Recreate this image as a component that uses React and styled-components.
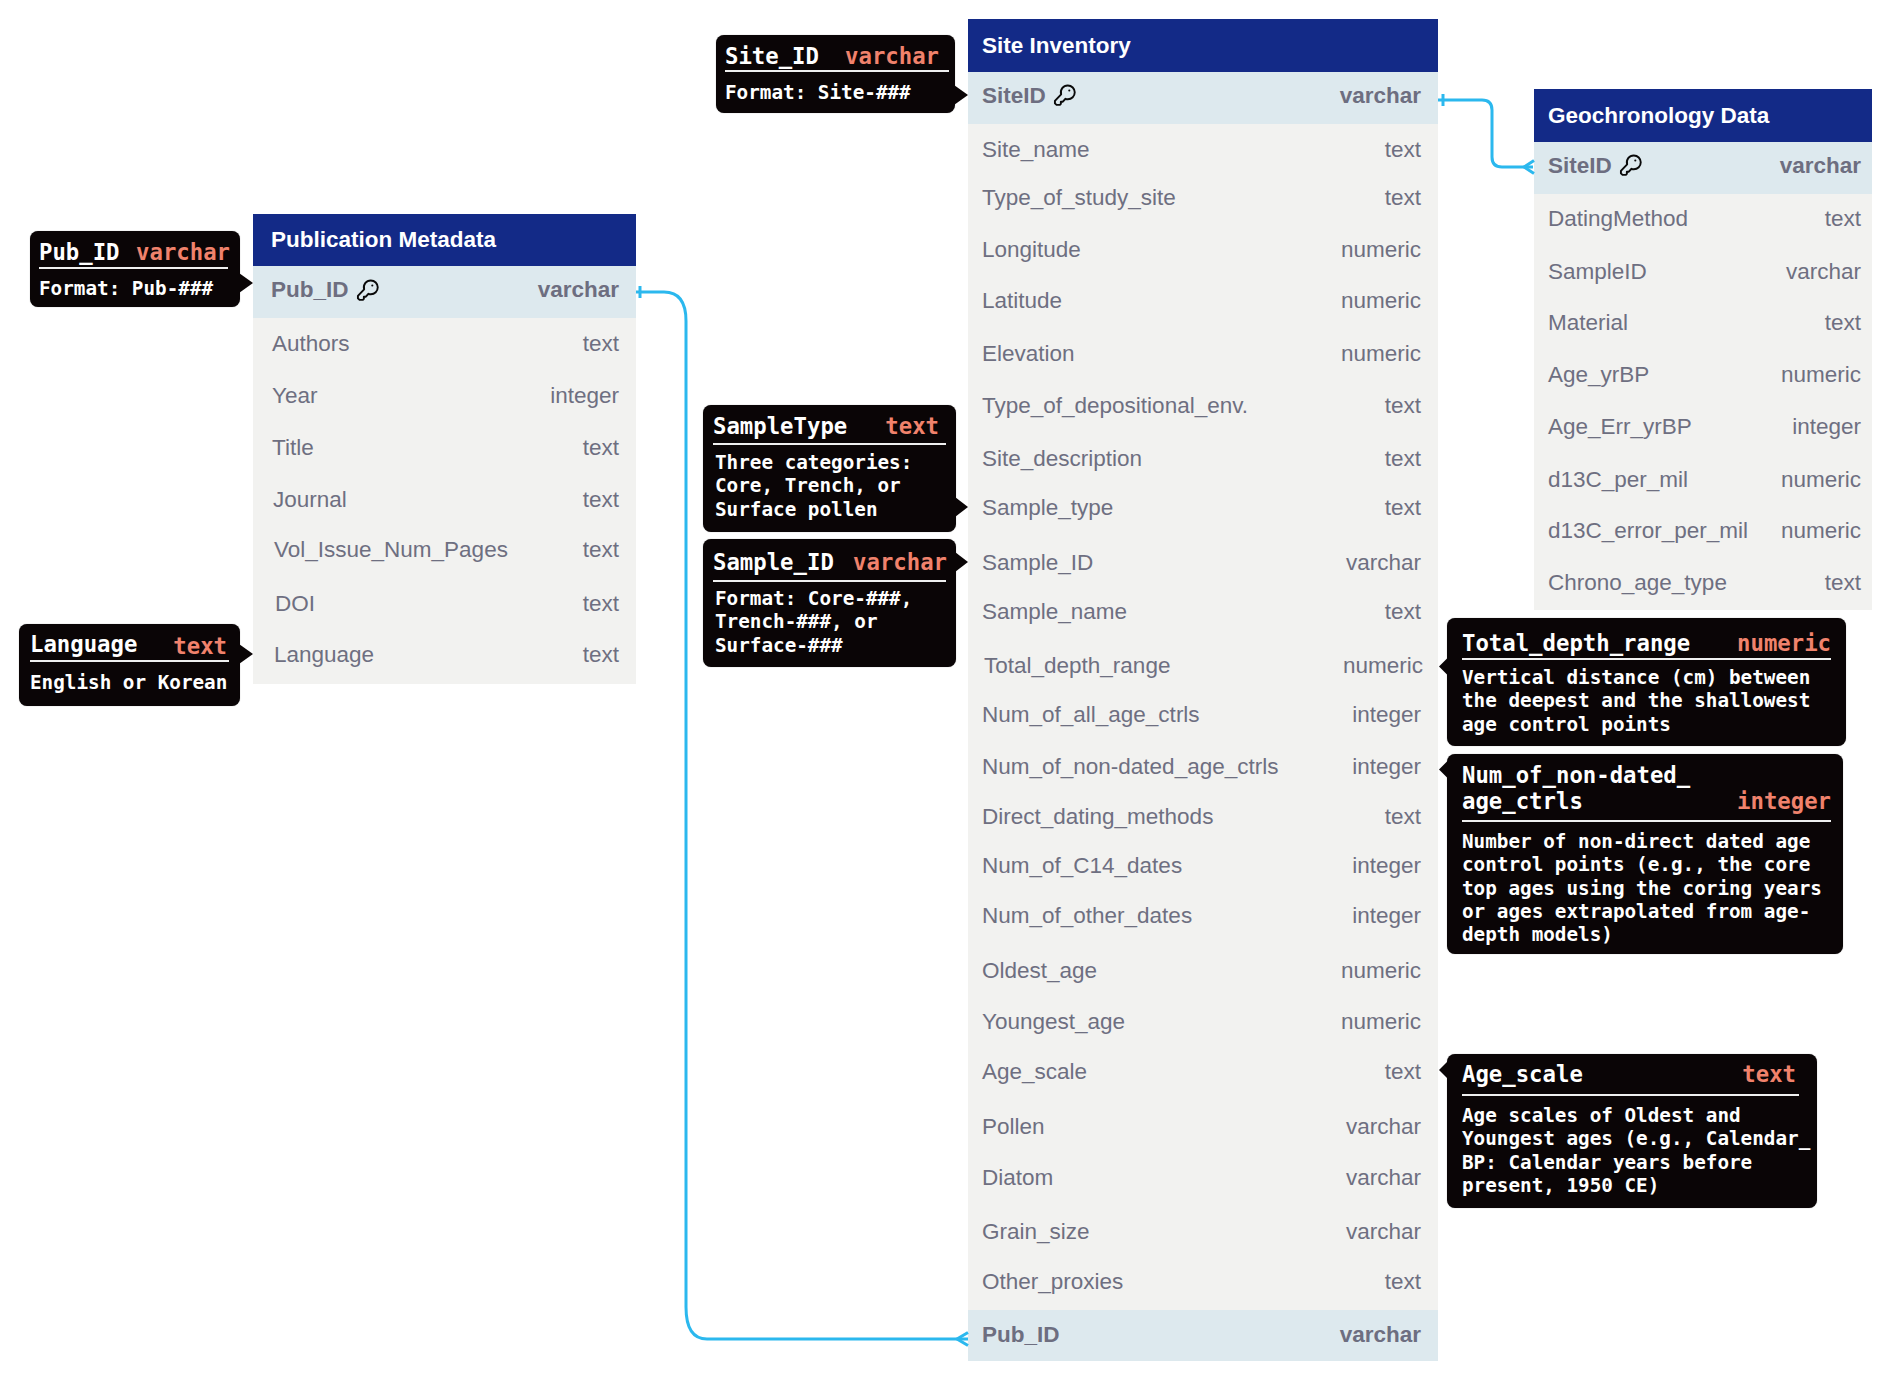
import React from "react";
import styled, { createGlobalStyle } from "styled-components";

const pubRows = [
  { name: "Authors", type: "text", cy: 344, indent: 1 },
  { name: "Year", type: "integer", cy: 396, indent: 1 },
  { name: "Title", type: "text", cy: 448, indent: 1 },
  { name: "Journal", type: "text", cy: 500, indent: 2 },
  { name: "Vol_Issue_Num_Pages", type: "text", cy: 550, indent: 3 },
  { name: "DOI", type: "text", cy: 604, indent: 4 },
  { name: "Language", type: "text", cy: 655, indent: 3 },
];

const siteRows = [
  { name: "Site_name", type: "text", cy: 149.5 },
  { name: "Type_of_study_site", type: "text", cy: 198 },
  { name: "Longitude", type: "numeric", cy: 250 },
  { name: "Latitude", type: "numeric", cy: 301 },
  { name: "Elevation", type: "numeric", cy: 354 },
  { name: "Type_of_depositional_env.", type: "text", cy: 406 },
  { name: "Site_description", type: "text", cy: 458.5 },
  { name: "Sample_type", type: "text", cy: 507.5 },
  { name: "Sample_ID", type: "varchar", cy: 562.5 },
  { name: "Sample_name", type: "text", cy: 612 },
  { name: "Total_depth_range", type: "numeric", cy: 665.5, indent: 2, push: 2 },
  { name: "Num_of_all_age_ctrls", type: "integer", cy: 715 },
  { name: "Num_of_non-dated_age_ctrls", type: "integer", cy: 767 },
  { name: "Direct_dating_methods", type: "text", cy: 817 },
  { name: "Num_of_C14_dates", type: "integer", cy: 866 },
  { name: "Num_of_other_dates", type: "integer", cy: 916 },
  { name: "Oldest_age", type: "numeric", cy: 971 },
  { name: "Youngest_age", type: "numeric", cy: 1022 },
  { name: "Age_scale", type: "text", cy: 1072 },
  { name: "Pollen", type: "varchar", cy: 1127 },
  { name: "Diatom", type: "varchar", cy: 1178 },
  { name: "Grain_size", type: "varchar", cy: 1232 },
  { name: "Other_proxies", type: "text", cy: 1282 },
];

const geoRows = [
  { name: "DatingMethod", type: "text", cy: 219 },
  { name: "SampleID", type: "varchar", cy: 272 },
  { name: "Material", type: "text", cy: 323 },
  { name: "Age_yrBP", type: "numeric", cy: 375.5 },
  { name: "Age_Err_yrBP", type: "integer", cy: 427.5 },
  { name: "d13C_per_mil", type: "numeric", cy: 480 },
  { name: "d13C_error_per_mil", type: "numeric", cy: 531.5 },
  { name: "Chrono_age_type", type: "text", cy: 583.5 },
];

const GlobalStyle = createGlobalStyle`
  html, body {
    margin: 0;
    padding: 0;
    background: #ffffff;
  }
`;

const Canvas = styled.div`
  position: relative;
  width: 1892px;
  height: 1381px;
  overflow: hidden;
  background: #ffffff;
  font-family: "Liberation Sans", Arial, sans-serif;
`;

const Lines = styled.svg`
  position: absolute;
  left: 0;
  top: 0;
  z-index: 2;
`;

const Table = styled.section`
  position: absolute;
  left: ${(p) => p.$x}px;
  top: ${(p) => p.$y}px;
  width: ${(p) => p.$w}px;
  display: flex;
  flex-direction: column;
`;

const Header = styled.h2`
  margin: 0;
  height: 52.5px;
  box-sizing: border-box;
  display: flex;
  align-items: center;
  padding: 1px 0 0 ${(p) => p.$pl}px;
  background: #132a87;
  color: #ffffff;
  font-size: 22.5px;
  font-weight: 700;
`;

const KeyRow = styled.div`
  height: ${(p) => p.$h || 52}px;
  box-sizing: border-box;
  display: flex;
  align-items: center;
  justify-content: space-between;
  padding: 0 ${(p) => p.$pr}px ${(p) => p.$pb || 0}px ${(p) => p.$pl}px;
  background: #dde9ee;
  color: #6d6e80;
  font-size: 22.5px;
  font-weight: 700;
`;

const KeyName = styled.span`
  display: flex;
  align-items: center;
  gap: 7px;
`;

const KeyIcon = styled.svg`
  width: 23px;
  height: 23px;
  flex: none;
`;

const Rows = styled.div`
  height: ${(p) => p.$h}px;
  padding: ${(p) => p.$pt}px ${(p) => p.$pr}px 0 ${(p) => p.$pl}px;
  box-sizing: border-box;
  background: #f2f2f0;
  color: #6e6f81;
  font-size: 22.5px;
`;

const Row = styled.div`
  height: ${(p) => p.$h}px;
  line-height: 26px;
  display: flex;
  justify-content: space-between;
  padding-left: ${(p) => p.$indent || 0}px;
  margin-right: ${(p) => -(p.$push || 0)}px;
`;

const Callout = styled.aside`
  position: absolute;
  left: ${(p) => p.$x}px;
  top: ${(p) => p.$y}px;
  width: ${(p) => p.$w}px;
  height: ${(p) => p.$h}px;
  box-sizing: border-box;
  padding: ${(p) => p.$pt}px 0 0 ${(p) => p.$pl}px;
  background: #0a0506;
  border-radius: 8px;
  box-shadow: 0 0 1px #8a8a8a;
  color: #ffffff;
  font-family: "DejaVu Sans Mono", "Liberation Mono", monospace;
  font-weight: 700;
`;

const Pointer = styled.i`
  position: absolute;
  top: ${(p) => p.$cy - p.$size}px;
  ${(p) => (p.$left ? `right: 100%;` : `left: 100%;`)}
  width: ${(p) => p.$len}px;
  height: ${(p) => p.$size * 2}px;
  margin-${(p) => (p.$left ? "right" : "left")}: -1px;
  background: #0a0506;
  clip-path: ${(p) =>
    p.$left
      ? "polygon(100% 0, 0 50%, 100% 100%)"
      : "polygon(0 0, 100% 50%, 0 100%)"};
`;

const TitleRow = styled.div`
  width: ${(p) => p.$w}px;
  box-sizing: border-box;
  display: flex;
  justify-content: space-between;
  align-items: flex-end;
  padding-bottom: ${(p) => p.$pb}px;
  border-bottom: 2.5px solid #efefef;
  font-size: 22.3px;
  line-height: 26px;
  white-space: nowrap;
`;

const TypeName = styled.span`
  color: #f0826c;
  margin-right: ${(p) => p.$inset || 0}px;
  margin-bottom: ${(p) => -(p.$drop || 0)}px;
`;

const Body = styled.p`
  margin: ${(p) => p.$mt}px 0 0 ${(p) => p.$indent || 0}px;
  font-size: 19.3px;
  line-height: 23.3px;
  white-space: pre;
`;

const Key = () => (
  <KeyIcon viewBox="0 0 24 24" fill="none" stroke="#0a0a0a" strokeWidth="2" strokeLinejoin="round">
    <path d="M15.5 1.5a7.2 7.2 0 0 1 0 14.4q-1.3 0-2.4-.5L10 18.6H8.2v2.2l-1 1H3.7L2 20.2v-2.6l6.5-6.8A7.2 7.2 0 0 1 15.5 1.5z" />
    <circle cx="17" cy="6.8" r="1.1" fill="#0a0a0a" stroke="none" />
  </KeyIcon>
);

// row height is the distance to the next row's text centre
const renderRows = (rows) =>
  rows.map((r, i) => (
    <Row
      key={r.name}
      $h={i < rows.length - 1 ? rows[i + 1].cy - r.cy : 26}
      $indent={r.indent}
      $push={r.push}
    >
      <span>{r.name}</span>
      <span>{r.type}</span>
    </Row>
  ));

const App = () => (
  <Canvas>
    <GlobalStyle />

    <Table $x={253} $y={213.5} $w={383}>
      <Header $pl={18}>Publication Metadata</Header>
      <KeyRow $pl={18} $pr={17} $pb={4}>
        <KeyName>
          Pub_ID
          <Key />
        </KeyName>
        varchar
      </KeyRow>
      <Rows $h={366} $pt={13} $pl={18} $pr={17}>
        {renderRows(pubRows)}
      </Rows>
    </Table>

    <Table $x={968} $y={19} $w={470}>
      <Header $pl={14}>Site Inventory</Header>
      <KeyRow $pl={14} $pr={17} $pb={4}>
        <KeyName>
          SiteID
          <Key />
        </KeyName>
        varchar
      </KeyRow>
      <Rows $h={1186} $pt={13} $pl={14} $pr={17}>
        {renderRows(siteRows)}
      </Rows>
      <KeyRow $pl={14} $pr={17} $h={51.5}>
        Pub_ID
        <span>varchar</span>
      </KeyRow>
    </Table>

    <Table $x={1533.5} $y={89} $w={338.5}>
      <Header $pl={14.5}>Geochronology Data</Header>
      <KeyRow $pl={14.5} $pr={11} $pb={4}>
        <KeyName>
          SiteID
          <Key />
        </KeyName>
        varchar
      </KeyRow>
      <Rows $h={416.5} $pt={12} $pl={14.5} $pr={11}>
        {renderRows(geoRows)}
      </Rows>
    </Table>

    <Callout $x={716} $y={35} $w={239} $h={78} $pt={8} $pl={9}>
      <Pointer $cy={60} $size={10} $len={14} />
      <TitleRow $w={224} $pb={1}>
        <span>Site_ID</span>
        <TypeName $inset={10}>varchar</TypeName>
      </TitleRow>
      <Body $mt={9}>Format: Site-###</Body>
    </Callout>

    <Callout $x={30} $y={231} $w={210} $h={76} $pt={8} $pl={9}>
      <Pointer $cy={52} $size={10} $len={14} />
      <TitleRow $w={189} $pb={2}>
        <span>Pub_ID</span>
        <TypeName $inset={-2}>varchar</TypeName>
      </TitleRow>
      <Body $mt={8}>Format: Pub-###</Body>
    </Callout>

    <Callout $x={19} $y={624} $w={221} $h={82} $pt={7} $pl={11}>
      <Pointer $cy={30} $size={10} $len={14} />
      <TitleRow $w={199} $pb={3}>
        <span>Language</span>
        <TypeName $inset={2} $drop={2}>text</TypeName>
      </TitleRow>
      <Body $mt={9}>English or Korean</Body>
    </Callout>

    <Callout $x={703} $y={405} $w={253} $h={127} $pt={8} $pl={10}>
      <Pointer $cy={102} $size={10} $len={13} />
      <TitleRow $w={233} $pb={4}>
        <span>SampleType</span>
        <TypeName $inset={7}>text</TypeName>
      </TitleRow>
      <Body $mt={6} $indent={2}>
        {"Three categories:\nCore, Trench, or\nSurface pollen"}
      </Body>
    </Callout>

    <Callout $x={703} $y={539} $w={253} $h={127.5} $pt={10} $pl={10}>
      <Pointer $cy={23} $size={10} $len={13} />
      <TitleRow $w={233} $pb={5}>
        <span>Sample_ID</span>
        <TypeName $inset={-1}>varchar</TypeName>
      </TitleRow>
      <Body $mt={5} $indent={2}>
        {"Format: Core-###,\nTrench-###, or\nSurface-###"}
      </Body>
    </Callout>

    <Callout $x={1447} $y={618} $w={399} $h={127.5} $pt={12} $pl={15}>
      <Pointer $left $cy={48.5} $size={9} $len={9} />
      <TitleRow $w={369} $pb={2}>
        <span>Total_depth_range</span>
        <TypeName>numeric</TypeName>
      </TitleRow>
      <Body $mt={6}>
        {"Vertical distance (cm) between\nthe deepest and the shallowest\nage control points"}
      </Body>
    </Callout>

    <Callout $x={1447} $y={754} $w={396} $h={199.5} $pt={8} $pl={15}>
      <Pointer $left $cy={15.5} $size={9} $len={9} />
      <TitleRow $w={369} $pb={6}>
        <span>
          Num_of_non-dated_
          <br />
          age_ctrls
        </span>
        <TypeName>integer</TypeName>
      </TitleRow>
      <Body $mt={8}>
        {"Number of non-direct dated age\ncontrol points (e.g., the core\ntop ages using the coring years\nor ages extrapolated from age-\ndepth models)"}
      </Body>
    </Callout>

    <Callout $x={1447} $y={1053.5} $w={370} $h={154.5} $pt={7.5} $pl={15}>
      <Pointer $left $cy={16.5} $size={9} $len={9} />
      <TitleRow $w={337} $pb={7}>
        <span>Age_scale</span>
        <TypeName $inset={3}>text</TypeName>
      </TitleRow>
      <Body $mt={8}>
        {"Age scales of Oldest and\nYoungest ages (e.g., Calendar_\nBP: Calendar years before\npresent, 1950 CE)"}
      </Body>
    </Callout>

    <Lines width="1892" height="1381" viewBox="0 0 1892 1381" fill="none" stroke="#2bb8ee" strokeWidth="3">
      <path d="M636 292H664Q686 292 686 321V1307Q686 1339 707 1339H968" />
      <path d="M640 286V298" />
      <path d="M968 1332.5L957 1339L968 1345.5" />
      <path d="M1438 100H1482Q1492 100 1492 110V157Q1492 167 1502 167H1533" />
      <path d="M1443 94V106" />
      <path d="M1534 160.5L1524 167L1534 173.5" />
    </Lines>
  </Canvas>
);

export default App;
